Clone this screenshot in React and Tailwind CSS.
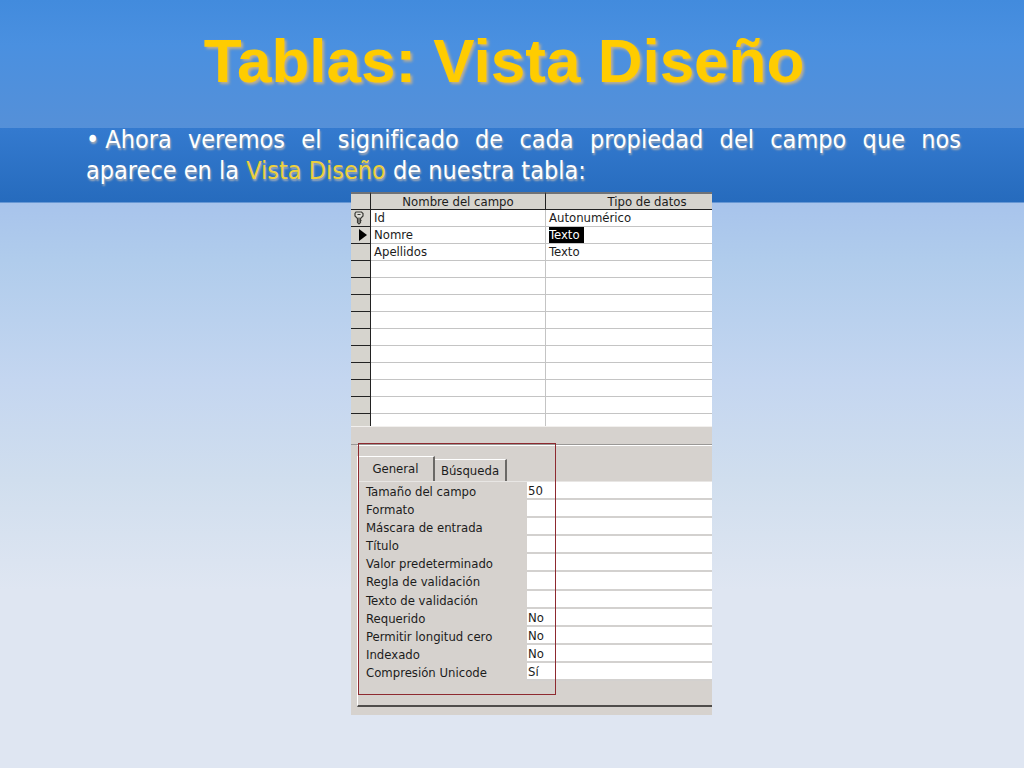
import React, { useState } from 'react';

const fields = [
    { name: 'Id', type: 'Autonumérico', marker: 'key' },
    { name: 'Nomre', type: 'Texto', marker: 'current' },
    { name: 'Apellidos', type: 'Texto' },
    ...Array.from({ length: 9 }, () => ({ name: '', type: '' })),
];

const properties = [
    { id: 'tamano', label: 'Tamaño del campo', value: '50' },
    { id: 'formato', label: 'Formato', value: '' },
    { id: 'mascara', label: 'Máscara de entrada', value: '' },
    { id: 'titulo', label: 'Título', value: '' },
    { id: 'predeterminado', label: 'Valor predeterminado', value: '' },
    { id: 'regla', label: 'Regla de validación', value: '' },
    { id: 'texto', label: 'Texto de validación', value: '' },
    { id: 'requerido', label: 'Requerido', value: 'No' },
    { id: 'longitud', label: 'Permitir longitud cero', value: 'No' },
    { id: 'indexado', label: 'Indexado', value: 'No' },
    { id: 'unicode', label: 'Compresión Unicode', value: 'Sí' },
];

function KeyIcon() {
    return (
        <svg viewBox="0 0 12 14" className="w-3 h-3.5 ml-0.5" fill="none" stroke="#3a3a36" strokeWidth="1.2">
            <path d="M3 1h5.500l1.500 1.500v2.500l-2.500 2.500v4l-1.500 1.500-1.500-1.500v-4l-2.500-2.500v-2.500z" fill="#dddcd6" />
            <path d="M4.500 3.500h3M6 6.500v5M7.500 9.500h1" />
        </svg>
    );
}

function CurrentIcon() {
    return (
        <svg viewBox="0 0 8 12" className="w-2 h-3 ml-2" fill="#000">
            <path d="M0 0l8 6-8 6z" />
        </svg>
    );
}

function FieldsTable() {
    return (
        <table className="w-full table-fixed border-separate border-spacing-0 bg-white">
            <colgroup>
                <col className="w-5" />
                <col className="w-[175px]" />
                <col />
            </colgroup>
            <thead>
                <tr className="h-[18px] bg-[#d6d4ce]">
                    <td className="border-t-2 border-t-[#6f7276] border-b border-r border-b-[#222] border-r-[#222] p-0" />
                    <th className="border-t-2 border-t-[#6f7276] border-b border-r border-b-[#222] border-r-[#222] p-0 font-normal leading-[15px]">
                        Nombre del campo
                    </th>
                    <th className="border-t-2 border-t-[#6f7276] border-b border-b-[#222] p-0 pl-9 font-normal leading-[15px]">
                        Tipo de datos
                    </th>
                </tr>
            </thead>
            <tbody>
                {fields.map((field, idx) => (
                    <tr key={idx} className="h-[17px]">
                        <td className="bg-[#d6d4ce] border-b border-r border-[#222] p-0">
                            {field.marker === 'key' && <KeyIcon />}
                            {field.marker === 'current' && <CurrentIcon />}
                        </td>
                        <td className="border-b border-r border-[#c4c4c4] p-0 pl-[3px] leading-4">{field.name}</td>
                        <td className="border-b border-[#c4c4c4] p-0 pl-[3px] leading-4">
                            <span className={field.marker === 'current' ? 'block w-fit bg-black pr-1 text-white' : ''}>
                                {field.type}
                            </span>
                        </td>
                    </tr>
                ))}
                <tr className="h-3">
                    <td className="bg-[#d6d4ce] border-r border-[#222] p-0" />
                    <td className="border-r border-[#c4c4c4] p-0" />
                    <td className="p-0" />
                </tr>
            </tbody>
        </table>
    );
}

function PropertySheet() {
    const [tab, setTab] = useState('general');

    return (
        <div className="relative border-t border-[#9a9896] pl-[6px] pb-2">
            <div className="border-t border-white pt-2.5">
                <div className="flex items-end" role="tablist">
                    <button
                        type="button"
                        role="tab"
                        aria-selected={tab === 'general'}
                        onClick={() => setTab('general')}
                        className="h-[25px] w-[78px] border-t border-l border-r-2 border-t-white border-l-white border-r-[#6b6966] leading-5"
                    >
                        General
                    </button>
                    <button
                        type="button"
                        role="tab"
                        aria-selected={tab === 'busqueda'}
                        onClick={() => setTab('busqueda')}
                        className="h-[22px] w-[72px] border-t border-r-2 border-t-white border-r-[#6b6966] leading-5"
                    >
                        Búsqueda
                    </button>
                </div>
                <div className="border-l border-b-2 border-l-white border-b-[#4f4d4b] pb-6">
                    <div className="grid h-[200px] auto-rows-fr border-t border-[#e8e6e4]">
                        {properties.map((prop) => (
                            <div key={prop.id} className="flex min-h-0">
                                <label htmlFor={prop.id} className="w-[169px] shrink-0 pl-2 leading-5">
                                    {prop.label}
                                </label>
                                <input
                                    id={prop.id}
                                    type="text"
                                    defaultValue={prop.value}
                                    className="min-w-0 flex-1 border-b-2 border-[#d3d1cf] bg-white pt-0.5 pl-px outline-none"
                                />
                            </div>
                        ))}
                    </div>
                </div>
            </div>
            {/* highlight around the property names */}
            <div className="pointer-events-none absolute left-[7px] -top-0.5 h-[252px] w-[198px] border border-[#8e2a30]" />
        </div>
    );
}

export default function App() {
    return (
        <main className="min-h-screen bg-[linear-gradient(to_bottom,#428bdd_0px,#4a90e0_45px,#5590d8_128px,#347acf_128px,#266bbd_202px,#a8c4ec_203px,#b0ccec_260px,#c4d6f0_380px,#d0deee_480px,#dfe6f2_590px,#dfe6f2_100%)]">
            <header className="h-32 pt-6 pr-4">
                <h1 className="text-center font-['Liberation_Sans',sans-serif] text-[62px] leading-[74px] font-bold text-[#ffcc00] [text-shadow:2px_2px_3px_#c0b090]">
                    Tablas: Vista Diseño
                </h1>
            </header>
            <p className="h-16 pl-[86px] pr-[63px] -mt-1 text-justify font-['DejaVu_Sans_Condensed','DejaVu_Sans',sans-serif] text-[25px] leading-[31px] text-white [font-variant-ligatures:none] [text-shadow:1px_2px_2px_#a3acb8]">
                <span className="mr-1.5">•</span>Ahora veremos el significado de cada propiedad del campo que nos aparece en la{' '}
                <span className="text-[#ecd03c]">Vista Diseño</span> de nuestra tabla:
            </p>
            <div className="flex justify-center pt-1 pb-[53px] pl-[39px]">
                <section className="w-[361px] bg-[#d6d2ce] font-['DejaVu_Sans_Condensed','DejaVu_Sans',sans-serif] text-[13px] text-[#1c1c1c]">
                    <FieldsTable />
                    <div className="h-[18px] border-t border-[#f2f0ee]" />
                    <PropertySheet />
                </section>
            </div>
        </main>
    );
}
